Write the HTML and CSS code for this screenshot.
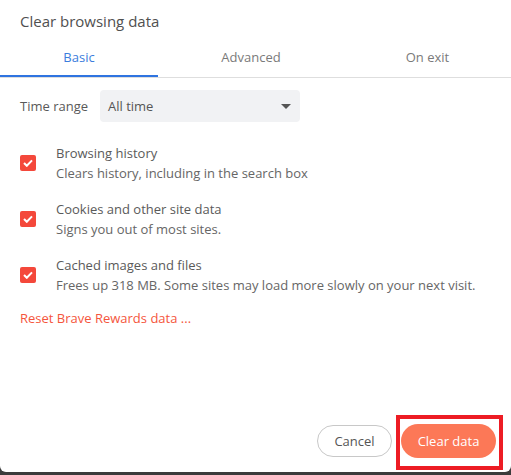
FILE: index.html
```html
<!DOCTYPE html>
<html>
<head>
<meta charset="utf-8">
<link rel="stylesheet" href="styles.css">
</head>
<body>
<div class="dialog">
  <div class="title">Clear browsing data</div>
  <div class="tabs">
    <div class="tab tab-basic active">Basic</div>
    <div class="tab tab-adv">Advanced</div>
    <div class="tab tab-exit">On exit</div>
  </div>
  <div class="content">
    <div class="range-row">
      <span class="range-label">Time range</span>
      <div class="select">
        <span>All time</span>
        <svg class="arrow" width="10" height="5" viewBox="0 0 10 5"><path d="M0 0h10L5 5z" fill="#555"/></svg>
      </div>
    </div>
    <div class="item">
      <div class="check"><svg width="10" height="8" viewBox="0 0 10 8"><path d="M1 4l2.8 2.8L9 1.4" fill="none" stroke="#fff" stroke-width="2"/></svg></div>
      <div class="item-text">
        <div class="item-title">Browsing history</div>
        <div class="item-sub">Clears history, including in the search box</div>
      </div>
    </div>
    <div class="item">
      <div class="check"><svg width="10" height="8" viewBox="0 0 10 8"><path d="M1 4l2.8 2.8L9 1.4" fill="none" stroke="#fff" stroke-width="2"/></svg></div>
      <div class="item-text">
        <div class="item-title">Cookies and other site data</div>
        <div class="item-sub">Signs you out of most sites.</div>
      </div>
    </div>
    <div class="item">
      <div class="check"><svg width="10" height="8" viewBox="0 0 10 8"><path d="M1 4l2.8 2.8L9 1.4" fill="none" stroke="#fff" stroke-width="2"/></svg></div>
      <div class="item-text">
        <div class="item-title">Cached images and files</div>
        <div class="item-sub">Frees up 318 MB. Some sites may load more slowly on your next visit.</div>
      </div>
    </div>
    <div class="reset">Reset Brave Rewards data ...</div>
  </div>
  <div class="footer">
    <button class="btn cancel">Cancel</button>
    <div class="primary-wrap">
      <button class="btn primary">Clear data</button>
      <div class="highlight"></div>
    </div>
  </div>
</div>
</body>
</html>
```
FILE: styles.css
```css
html, body {
  margin: 0;
  padding: 0;
}
body {
  background: #3b3b3b;
  width: 511px;
  height: 475px;
  overflow: hidden;
  font-family: "Open Sans", "Liberation Sans", sans-serif;
}
.dialog {
  background: #fff;
  width: 511px;
  height: 472px;
  border-radius: 0 0 6px 6px;
  display: flex;
  flex-direction: column;
  box-sizing: border-box;
}
.title {
  font-size: 15px;
  line-height: 20px;
  color: #505050;
  padding: 11px 20px 9px;
}
.tabs {
  display: flex;
  border-bottom: 1px solid #dedede;
}
.tab {
  font-size: 13px;
  color: #7a7a7a;
  text-align: center;
  height: 35px;
  line-height: 35px;
  border-bottom: 2px solid transparent;
}
.tab-basic { width: 158px; }
.tab-adv { width: 186px; }
.tab-exit { width: 167px; }
.tab.active {
  color: #3b7ddd;
  border-bottom-color: #2f74e0;
}
.content {
  padding: 12px 20px 0;
  display: flex;
  flex-direction: column;
}
.range-row {
  display: flex;
  align-items: center;
  height: 32px;
}
.range-label {
  font-size: 13px;
  color: #595959;
  width: 80px;
}
.select {
  width: 200px;
  height: 32px;
  background: #f1f2f4;
  border-radius: 4px;
  display: flex;
  align-items: center;
  justify-content: space-between;
  padding: 0 9px 0 8px;
  box-sizing: border-box;
  font-size: 13px;
  color: #555;
}
.item {
  display: flex;
  align-items: center;
  margin-top: 16px;
}
.range-row + .item { margin-top: 21px; }
.check {
  width: 16px;
  height: 16px;
  background: #f4483b;
  border-radius: 2px;
  display: flex;
  align-items: center;
  justify-content: center;
  margin-right: 20px;
  flex: none;
}
.item-title, .item-sub {
  font-size: 13px;
  line-height: 20px;
  color: #5a5a5a;
}
.item-sub { color: #666; }
.reset {
  margin-top: 13px;
  font-size: 13px;
  line-height: 20px;
  color: #f5553c;
}
.footer {
  margin-top: auto;
  display: flex;
  justify-content: flex-end;
  align-items: center;
  padding: 0 15px 14px 0;
  gap: 9px;
}
.btn {
  font-family: inherit;
  font-size: 13px;
  border-radius: 17px;
  cursor: pointer;
}
.cancel {
  width: 75px;
  height: 32px;
  background: #fff;
  border: 1px solid #c8c8c8;
  color: #555;
}
.primary-wrap {
  position: relative;
  display: flex;
}
.primary {
  width: 95px;
  height: 34px;
  background: #fc7857;
  border: none;
  color: #fff;
}
.highlight {
  position: absolute;
  left: -5px;
  top: -9px;
  width: 99px;
  height: 47px;
  border: 4px solid #ed1c24;
}
```
